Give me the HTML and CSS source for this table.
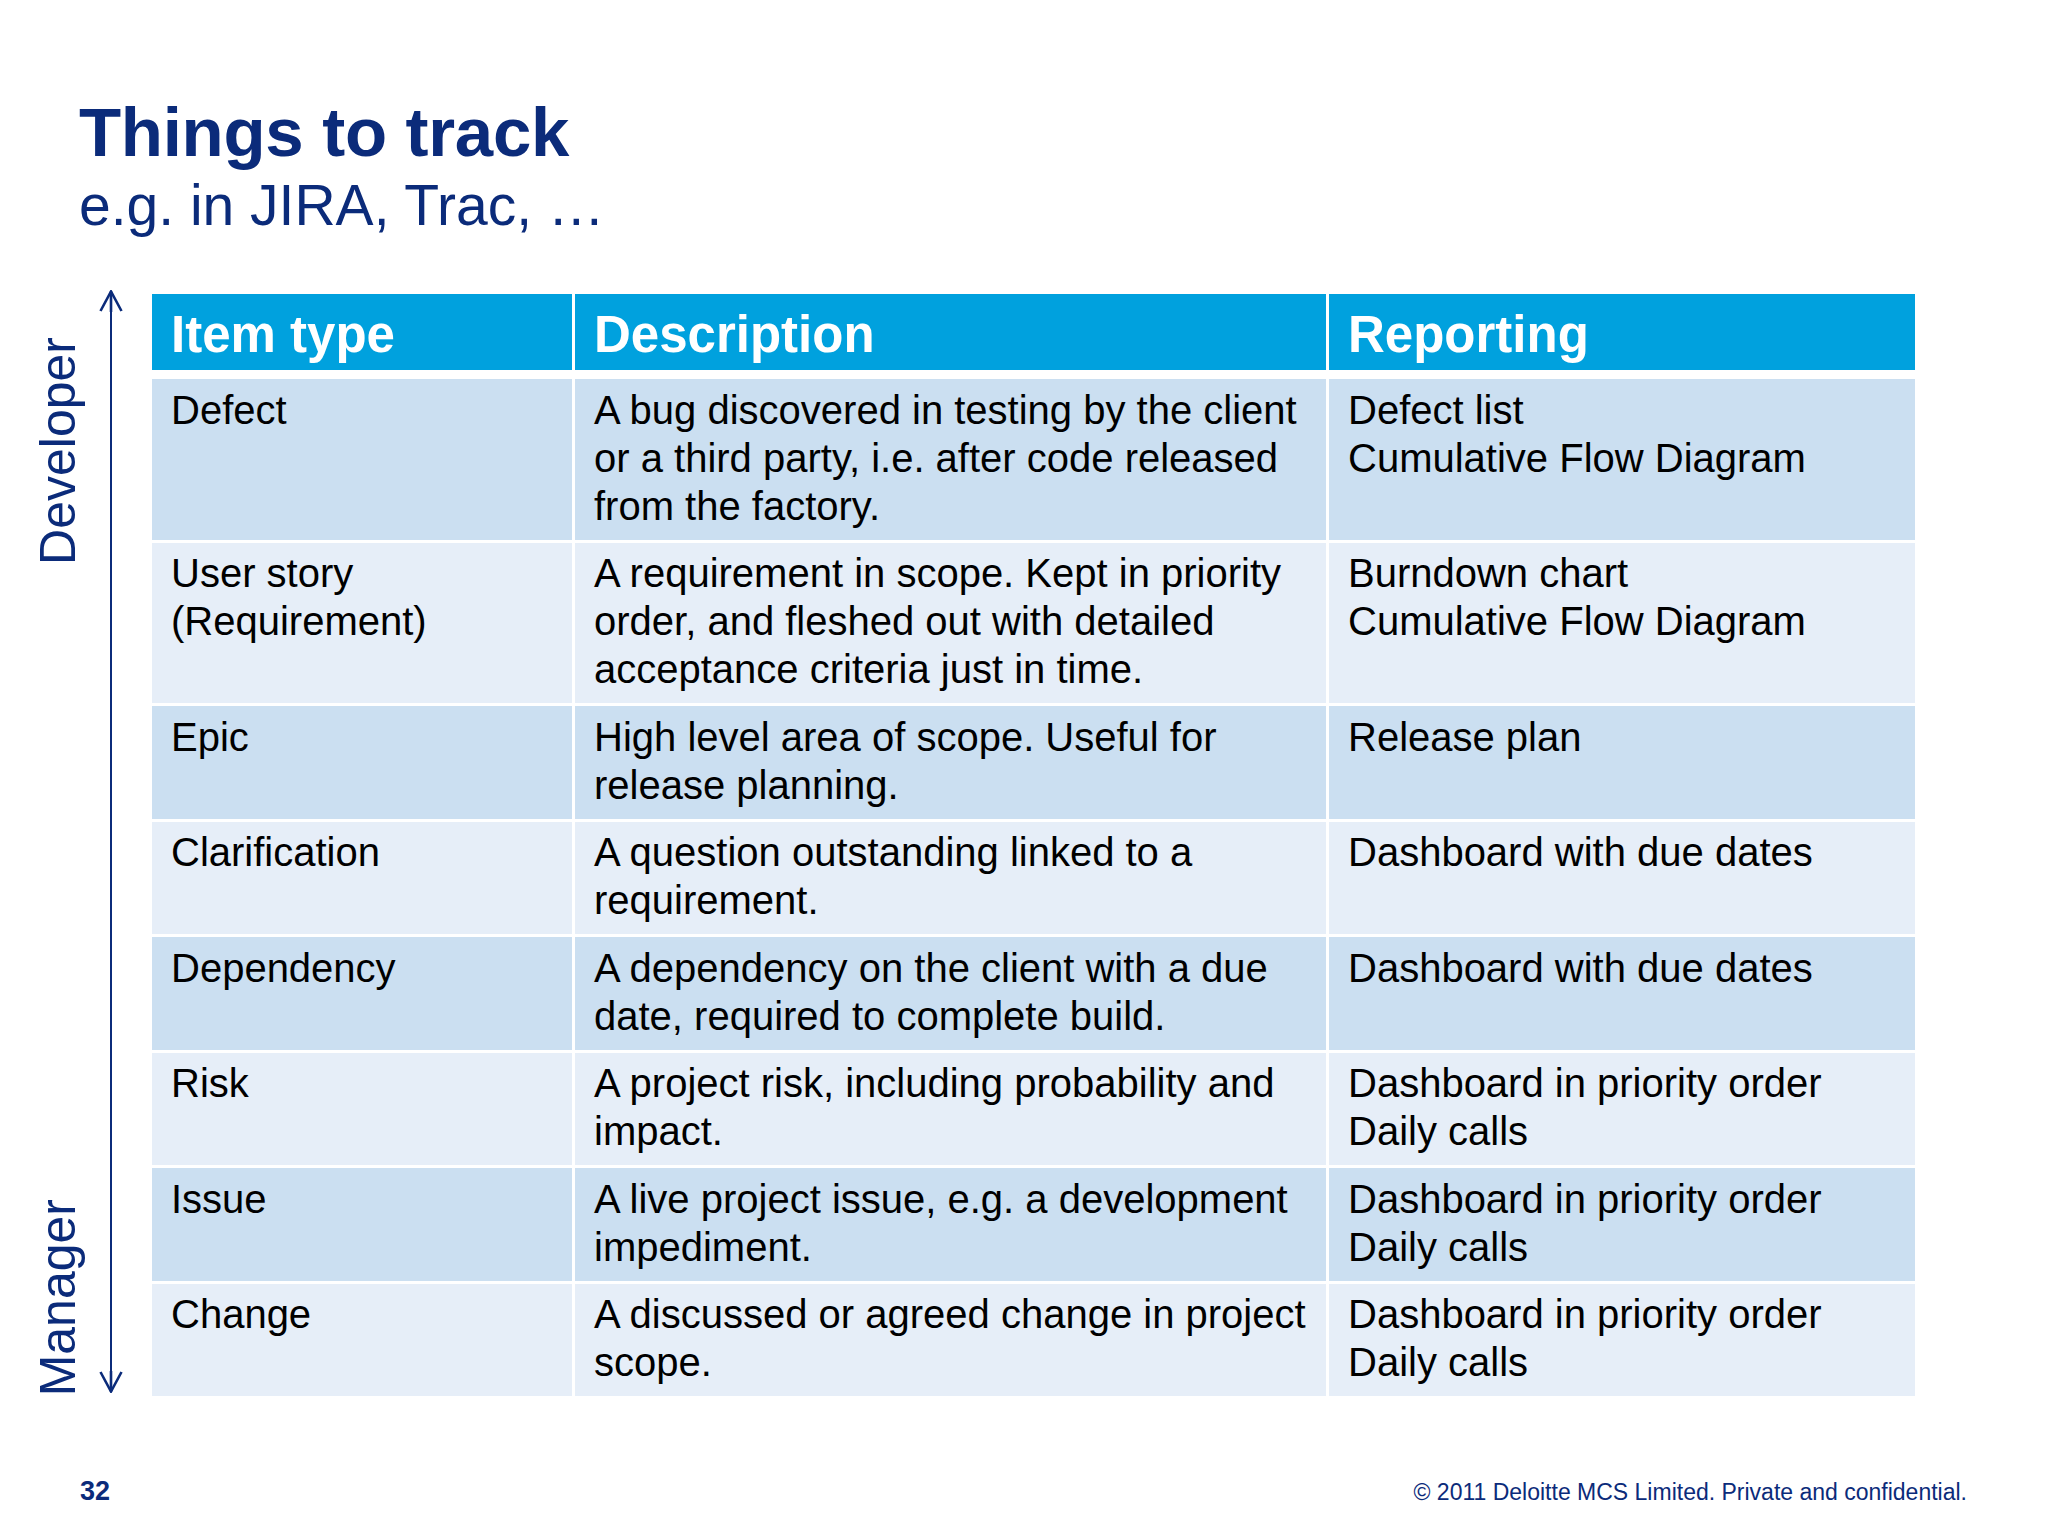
FILE: index.html
```html
<!DOCTYPE html>
<html lang="en">
<head>
<meta charset="utf-8">
<title>Things to track</title>
<link rel="stylesheet" href="styles.css">
</head>
<body>
<div class="slide">
  <header class="titles">
    <h1 class="title">Things to track</h1>
    <p class="subtitle">e.g. in JIRA, Trac, …</p>
  </header>

  <main class="main">
    <div class="axis">
      <div class="axis-labels">
        <span class="axis-label dev">Developer</span>
        <span class="axis-label mgr">Manager</span>
      </div>
      <div class="axis-arrow">
        <svg class="arrow-head" width="24" height="22" viewBox="0 0 24 22" aria-hidden="true">
          <path d="M1.5 21 L12 1.5 L22.5 21" fill="none" stroke="#0b2b7a" stroke-width="2.6" stroke-linejoin="miter"/>
          <path d="M12 1.5 V22" stroke="#0b2b7a" stroke-width="2.6"/>
        </svg>
        <div class="arrow-shaft"></div>
        <svg class="arrow-head" width="24" height="22" viewBox="0 0 24 22" aria-hidden="true">
          <path d="M1.5 1 L12 20.5 L22.5 1" fill="none" stroke="#0b2b7a" stroke-width="2.6" stroke-linejoin="miter"/>
          <path d="M12 0 V20.5" stroke="#0b2b7a" stroke-width="2.6"/>
        </svg>
      </div>
    </div>

    <div class="table">
      <div class="row row-head">
        <div class="cell">Item type</div>
        <div class="cell">Description</div>
        <div class="cell">Reporting</div>
      </div>
      <div class="row row-dark">
        <div class="cell">Defect</div>
        <div class="cell">A bug discovered in testing by the client or a third party, i.e. after code released from the factory.</div>
        <div class="cell">Defect list<br>Cumulative Flow Diagram</div>
      </div>
      <div class="row row-light">
        <div class="cell">User story (Requirement)</div>
        <div class="cell">A requirement in scope. Kept in priority order, and fleshed out with detailed acceptance criteria just in time.</div>
        <div class="cell">Burndown chart<br>Cumulative Flow Diagram</div>
      </div>
      <div class="row row-dark">
        <div class="cell">Epic</div>
        <div class="cell">High level area of scope. Useful for release planning.</div>
        <div class="cell">Release plan</div>
      </div>
      <div class="row row-light">
        <div class="cell">Clarification</div>
        <div class="cell">A question outstanding linked to a requirement.</div>
        <div class="cell">Dashboard with due dates</div>
      </div>
      <div class="row row-dark">
        <div class="cell">Dependency</div>
        <div class="cell">A dependency on the client with a due date, required to complete build.</div>
        <div class="cell">Dashboard with due dates</div>
      </div>
      <div class="row row-light">
        <div class="cell">Risk</div>
        <div class="cell">A project risk, including probability and impact.</div>
        <div class="cell">Dashboard in priority order<br>Daily calls</div>
      </div>
      <div class="row row-dark">
        <div class="cell">Issue</div>
        <div class="cell">A live project issue, e.g. a development impediment.</div>
        <div class="cell">Dashboard in priority order<br>Daily calls</div>
      </div>
      <div class="row row-light">
        <div class="cell">Change</div>
        <div class="cell">A discussed or agreed change in project scope.</div>
        <div class="cell">Dashboard in priority order<br>Daily calls</div>
      </div>
    </div>
  </main>

  <footer class="footer">
    <span class="page-num">32</span>
    <span class="copyright">© 2011 Deloitte MCS Limited. Private and confidential.</span>
  </footer>
</div>
</body>
</html>
```

FILE: styles.css
```css
html, body {
  margin: 0;
  padding: 0;
  background: #ffffff;
}

.slide {
  width: 2048px;
  height: 1536px;
  overflow: hidden;
  font-family: "Liberation Sans", Arial, sans-serif;
  color: #000000;
  background: #ffffff;
}

.titles {
  padding-top: 98px;
  padding-left: 79px;
  color: #0b2b7a;
}

.title {
  margin: 0;
  font-size: 69px;
  line-height: 69px;
  font-weight: bold;
  letter-spacing: -0.3px;
}

.subtitle {
  margin: 10px 0 0 0;
  font-size: 57px;
  line-height: 57px;
  font-weight: normal;
}

.main {
  display: flex;
  align-items: stretch;
  margin-top: 56px;
}

.axis {
  width: 152px;
  flex: none;
  display: flex;
  box-sizing: border-box;
}

.axis-labels {
  width: 50px;
  margin-left: 33px;
  display: flex;
  flex-direction: column;
  justify-content: space-between;
  align-items: flex-start;
}

.axis-label {
  display: block;
  writing-mode: vertical-rl;
  transform: rotate(180deg);
  font-size: 50px;
  line-height: 50px;
  color: #0b2b7a;
  white-space: nowrap;
}

.axis-label.dev {
  margin-top: 47px;
}

.axis-arrow {
  width: 24px;
  margin-left: 16px;
  display: flex;
  flex-direction: column;
  align-items: center;
  padding-bottom: 3px;
}

.arrow-head {
  display: block;
  flex: none;
}

.arrow-shaft {
  flex: 1;
  width: 2.6px;
  background: #0b2b7a;
}

.table {
  margin-top: 3.5px;
  display: flex;
  flex-direction: column;
  gap: 3px;
}

.row {
  display: grid;
  grid-template-columns: 420px 751px 586px;
  column-gap: 3px;
}

.cell {
  padding: 6.5px 12px 10px 19px;
  font-size: 40px;
  line-height: 48px;
}

.row-head {
  margin-bottom: 6px;
}

.row-head .cell {
  background: #00a1de;
  color: #ffffff;
  font-weight: bold;
  font-size: 51px;
  line-height: 60px;
  padding: 11px 12px 5.5px 19px;
}

.row-dark .cell {
  background: #cbdff1;
}

.row-light .cell {
  background: #e6eef8;
}

.footer {
  display: flex;
  justify-content: space-between;
  align-items: baseline;
  margin-top: 80px;
  padding: 0 81px 0 80px;
  color: #0b2b7a;
}

.page-num {
  font-size: 27px;
  line-height: 30px;
  font-weight: bold;
}

.copyright {
  font-size: 23px;
  line-height: 30px;
}
```
